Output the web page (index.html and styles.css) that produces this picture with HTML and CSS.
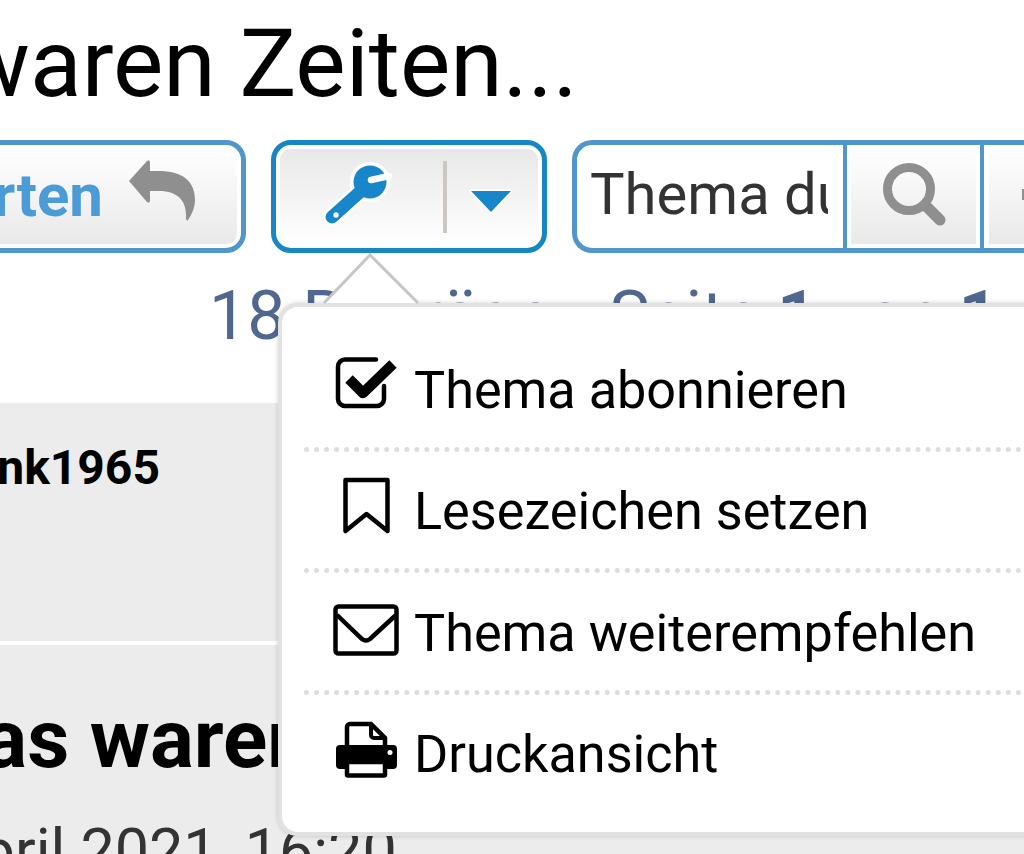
FILE: index.html
```html
<!DOCTYPE html>
<html lang="de">
<head>
<meta charset="utf-8">
<title>Das waren Zeiten...</title>
<link rel="stylesheet" href="styles.css">
</head>
<body>
<main class="page">
  <h1 class="title">Das waren Zeiten...</h1>
  <div class="toolbar">
    <div class="btn btn-reply">
      <span class="reply-label">Antworten</span>
      <svg class="reply-icon" viewBox="0 0 66 62" width="66" height="62"><path fill="#8f8f8f" d="M0 21 L18 1 Q21 -1 21 3 V11 H30 C52 11 66 20 66 40 C66 48 62 56 59 60 C58 61 57 60 57 58 C58 42 50 31 30 31 H21 V40 Q21 44 18 42 Z"/></svg>
    </div>
    <div class="btn btn-tools">
      <svg class="wrench" viewBox="0 0 80 80" width="80" height="80">
        <circle cx="51" cy="26" r="20" fill="#fff"/>
        <path d="M42 35 L13 61" fill="none" stroke="#fff" stroke-width="18" stroke-linecap="round"/>
        <circle cx="51" cy="26" r="16.5" fill="#1787c9"/>
        <path d="M42 35 L13 61" fill="none" stroke="#1787c9" stroke-width="13" stroke-linecap="round"/>
        <path d="M52 24 L70 20" fill="none" stroke="#fff" stroke-width="6.5" stroke-linecap="round"/>
        <circle cx="17" cy="59" r="2.7" fill="#fff"/>
      </svg>
      <span class="divider"></span>
      <svg class="caret" viewBox="0 0 44 26" width="44" height="26"><path d="M2 2 H42 L22 23 Z" fill="#1787c9" stroke="#fff" stroke-width="3" paint-order="stroke" stroke-linejoin="round"/></svg>
    </div>
    <div class="search">
      <div class="search-field"><span class="search-text">Thema durchsuchen</span></div>
      <div class="search-btn">
        <svg class="search-icon" viewBox="0 0 66 66" width="66" height="66" fill="none" stroke="#8f8f8f"><circle cx="28" cy="27" r="21.5" stroke-width="9"/><path d="M44 43 L59 58" stroke-width="11" stroke-linecap="round"/></svg>
      </div>
      <div class="search-btn search-more">
        <svg class="gear" viewBox="0 0 30 30" width="30" height="30"><rect x="0" y="7" width="4" height="11" fill="#8f8f8f"/></svg>
      </div>
    </div>
  </div>
  <p class="meta">18 Beiträge • Seite <strong>1</strong> von <strong>1</strong></p>
  <section class="post">
    <div class="author-row"><span class="author">Frank1965</span></div>
    <h2 class="post-title">Das waren Zeiten...</h2>
    <p class="post-date">Mi 28. April 2021, 16:20</p>
  </section>
</main>

<div class="popup">
  <svg class="popup-arrow" viewBox="0 0 100 52" width="100" height="52"><path d="M2 50 L48 2 L96 50" fill="#fff" stroke="#c6c6c6" stroke-width="3"/></svg>
  <ul class="menu">
    <li class="menu-item">
      <svg viewBox="0 0 70 70" width="70" height="70" fill="none" stroke="#000"><path d="M45 6.5 H14 a7 7 0 0 0 -7 7 V46 a7 7 0 0 0 7 7 H46 a7 7 0 0 0 7 -7 V33" stroke-width="4.5" stroke-linecap="round"/><path d="M18 26 L32 40 L62 11" stroke-width="10.5" stroke-linejoin="round"/></svg>
      <span class="menu-label">Thema abonnieren</span>
    </li>
    <li class="menu-item">
      <svg viewBox="0 0 70 70" width="70" height="70" fill="none" stroke="#000"><path d="M14.5 5 H56.5 V56 L35.5 39 L14.5 56 Z" stroke-width="4.5" stroke-linejoin="round"/></svg>
      <span class="menu-label">Lesezeichen setzen</span>
    </li>
    <li class="menu-item">
      <svg viewBox="0 0 70 70" width="70" height="70" fill="none" stroke="#000"><rect x="4.5" y="10.5" width="61" height="47" rx="3" stroke-width="4.5"/><path d="M6 19 L31 43 Q35 46 39 43 L65 19" stroke-width="4.5"/></svg>
      <span class="menu-label">Thema weiterempfehlen</span>
    </li>
    <li class="menu-item">
      <svg viewBox="0 0 70 70" width="70" height="70"><path d="M16 28 V9 a3 3 0 0 1 3 -3 H40 L54 20 V28" fill="#fff" stroke="#000" stroke-width="4.5"/><path d="M40 6 V17 a3 3 0 0 0 3 3 H54" fill="none" stroke="#000" stroke-width="4"/><rect x="5" y="27" width="61" height="24" rx="4" fill="#000"/><rect x="16" y="44" width="38" height="13.5" rx="1" fill="#fff" stroke="#000" stroke-width="4.5"/><circle cx="59" cy="34.5" r="2.5" fill="#fff"/></svg>
      <span class="menu-label">Druckansicht</span>
    </li>
  </ul>
</div>
</body>
</html>
```

FILE: styles.css
```css
* { box-sizing: border-box; }

html, body {
  margin: 0;
  width: 1024px;
  height: 854px;
  overflow: hidden;
  background: #fff;
  font-family: Roboto, "Liberation Sans", sans-serif;
}

body { position: relative; }

.page {
  display: flex;
  flex-direction: column;
  width: 1024px;
  height: 854px;
  overflow: hidden;
  padding-top: 11px;
}

.title {
  margin: 0 0 0 -228px;
  font-size: 95px;
  line-height: 106px;
  font-weight: 400;
  color: #000;
  white-space: nowrap;
}

.toolbar {
  display: flex;
  gap: 25px;
  margin: 23px 0 0 -154px;
  height: 113px;
  flex: none;
}

.btn {
  display: flex;
  align-items: center;
  height: 113px;
  padding: 4px;
  border-radius: 20px;
  flex: none;
}

.btn-reply {
  width: 400px;
  justify-content: flex-end;
  border: 5px solid #4f97cb;
  background: linear-gradient(#fff, #e9e9e9) content-box, #fff;
}

.reply-label {
  margin-top: -3px;
  font-size: 60px;
  font-weight: 700;
  color: #4a9bd6;
  white-space: nowrap;
}

.reply-icon {
  flex: none;
  margin: -12px 42px 0 26px;
}

.btn-tools {
  width: 276px;
  border: 5px solid #1787c4;
  background: linear-gradient(#e8e8e8, #fff) content-box, #fff;
}

.wrench {
  flex: none;
  margin: -2px 0 0 39px;
}

.divider {
  width: 4px;
  height: 72px;
  margin-left: 44px;
  background: #cbc8c4;
}

.caret {
  flex: none;
  margin: 10px 0 0 22px;
}

.search {
  display: flex;
  height: 113px;
  flex: none;
}

.search-field {
  display: flex;
  align-items: center;
  width: 271px;
  padding: 0 15px 5px 13px;
  border: 5px solid #4f97cb;
  border-right: 0;
  border-radius: 20px 0 0 20px;
  background: #fff;
  overflow: hidden;
}

.search-text {
  display: block;
  width: 100%;
  overflow: hidden;
  font-size: 58px;
  line-height: 68px;
  color: #333;
  white-space: nowrap;
}

.search-btn {
  display: flex;
  align-items: center;
  justify-content: center;
  width: 137px;
  padding: 4px;
  border: 5px solid #4f97cb;
  border-left-width: 4px;
  border-right-width: 0;
  background: linear-gradient(#fff, #e9e9e9) content-box, #fff;
  flex: none;
}

.search-icon {
  flex: none;
  margin-top: -4px;
}

.search-more {
  justify-content: flex-start;
  padding-left: 5px;
}

.gear {
  flex: none;
  margin-left: 33px;
}

.meta {
  margin: 23px 0 0 209px;
  font-size: 68px;
  line-height: 80px;
  color: #50688f;
  white-space: nowrap;
  flex: none;
}

.post {
  flex: 1;
  margin-top: 47px;
  background: #ececec;
  overflow: hidden;
}

.author-row {
  height: 242px;
  padding-top: 37px;
  border-bottom: 4px solid #fff;
}

.author {
  display: block;
  margin-left: -71px;
  font-size: 48px;
  line-height: 56px;
  font-weight: 700;
  color: #000;
  white-space: nowrap;
}

.post-title {
  margin: 48px 0 0 -70px;
  font-size: 82px;
  line-height: 92px;
  font-weight: 700;
  color: #000;
  white-space: nowrap;
}

.post-date {
  margin: 31px 0 0 -242px;
  font-size: 61px;
  line-height: 70px;
  color: #333;
  white-space: nowrap;
}

.popup {
  position: absolute;
  left: 278px;
  top: 303px;
  width: 900px;
  height: 533px;
  padding: 23px 22px 0;
  background: #fff;
  border: 4px solid #e2e2e2;
  border-radius: 20px;
  box-shadow: 0 0 5px rgba(0, 0, 0, .18);
}

.popup-arrow {
  position: absolute;
  left: 40px;
  top: -54px;
}

.menu {
  margin: 0;
  padding: 0;
  list-style: none;
}

.menu-item {
  display: flex;
  align-items: center;
  gap: 13px;
  height: 121.5px;
  padding-left: 27px;
  font-size: 52.2px;
  color: #000;
  white-space: nowrap;
  border-bottom: 5px dotted #ddd;
}

.menu-item:last-child { border-bottom-color: transparent; }

.menu-item svg { flex: none; }

.menu-label { padding-top: 4px; }
```
